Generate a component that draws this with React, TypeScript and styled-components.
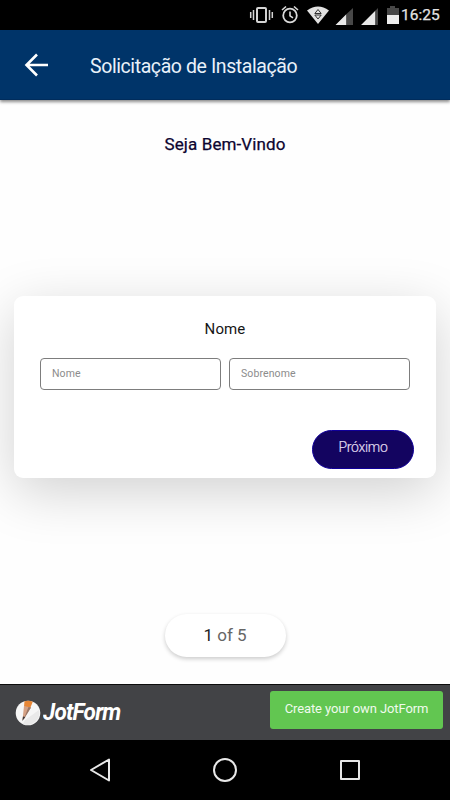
import styled, { createGlobalStyle } from "styled-components";

const GlobalStyle = createGlobalStyle`
  * {
    box-sizing: border-box;
  }
  body {
    margin: 0;
    background: #fefefe;
    font-family: Roboto, "Liberation Sans", sans-serif;
  }
`;

const Screen = styled.div`
  display: flex;
  flex-direction: column;
  width: 450px;
  height: 800px;
  overflow: hidden;
  background: #fefefe;
`;

const StatusBar = styled.div`
  display: flex;
  flex: none;
  height: 30px;
  background: #000;
  svg {
    display: block;
    margin-left: 245px;
  }
`;

const Clock = styled.time`
  color: #e4e4e4;
  font-size: 15.5px;
  -webkit-text-stroke: 0.25px #e4e4e4;
  line-height: 31px;
`;

const AppBar = styled.header`
  display: flex;
  align-items: center;
  flex: none;
  height: 70px;
  padding: 1px 0 0 24px;
  background: #003469;
  border-bottom: 1px solid #002c5c;
  box-shadow: 0 2px 3px rgba(0, 0, 0, 0.45);
  z-index: 1;
`;

const BackButton = styled.button`
  display: flex;
  width: 66px;
  padding: 0;
  border: 0;
  background: none;
`;

const AppTitle = styled.h1`
  margin: 2px 0 0;
  color: #e9f1fa;
  font-size: 19.5px;
  font-weight: 400;
  letter-spacing: -0.41px;
`;

const Content = styled.main`
  display: flex;
  flex: none;
  flex-direction: column;
  align-items: center;
  height: 584px;
`;

const Welcome = styled.h2`
  margin: 34px 0 0;
  height: 162px;
  color: #0c0430;
  font-size: 17px;
  font-weight: 400;
  -webkit-text-stroke: 0.25px #0c0430;
  letter-spacing: 0.1px;
  line-height: 20px;
`;

const Card = styled.form`
  display: flex;
  flex: none;
  flex-direction: column;
  width: 422px;
  height: 182px;
  padding: 24px 26px 0;
  border-radius: 9px;
  background: #fff;
  box-shadow: 0 14px 54px rgba(0, 0, 0, 0.18);
`;

const Question = styled.label`
  color: #161616;
  font-size: 15px;
  letter-spacing: 0.1px;
  line-height: 18px;
  text-align: center;
`;

const Fields = styled.div`
  display: flex;
  gap: 8px;
  margin-top: 20px;
`;

const Field = styled.input`
  width: 181px;
  height: 32px;
  padding: 0 11px 2px;
  border: 1px solid #7d7d7d;
  border-radius: 4px;
  outline: none;
  background: #fff;
  font: 400 10.5px Roboto, sans-serif;
  letter-spacing: 0.1px;
  &::placeholder {
    color: #8c8c8c;
    opacity: 1;
  }
`;

const NextButton = styled.button`
  align-self: flex-end;
  width: 102px;
  height: 39px;
  margin: 40px -4px 0 0;
  padding: 0 0 5px;
  border: 1px solid #11009a;
  border-radius: 20px;
  background: #130460;
  color: #e0dcf0;
  font: 300 14px Roboto, sans-serif;
  letter-spacing: -0.3px;
  -webkit-text-stroke: 0.2px #e0dcf0;
`;

const Pager = styled.div`
  flex: none;
  width: 121px;
  height: 43px;
  margin-top: 136px;
  border-radius: 22px;
  background: #fff;
  box-shadow: 0 2px 4px rgba(0, 0, 0, 0.2);
  color: #666;
  font-size: 17px;
  line-height: 43px;
  text-align: center;
  b {
    color: #222;
    font-weight: 400;
  }
`;

const Footer = styled.footer`
  display: flex;
  flex: none;
  align-items: flex-start;
  height: 56px;
  padding: 7px 7px 0 15px;
  border-top: 1px solid #0c0c0c;
  background: #424346;
`;

const Logo = styled.div`
  display: flex;
  flex: 1;
  align-items: center;
  height: 41px;
`;

const LogoName = styled.span`
  margin-left: 2px;
  color: #fff;
  font: italic 700 23px Roboto, sans-serif;
  letter-spacing: -0.8px;
  transform: scaleX(0.98);
  transform-origin: left;
`;

const CreateButton = styled.button`
  width: 173px;
  height: 38px;
  margin-top: -1px;
  padding: 0 0 4px;
  border: 0;
  border-radius: 3px;
  background: #62c651;
  color: #f0faee;
  font: 400 13px Roboto, sans-serif;
  letter-spacing: -0.1px;
`;

const NavBar = styled.nav`
  flex: none;
  height: 60px;
  background: #000;
  svg {
    display: block;
  }
`;

function StatusIcons() {
  return (
    <svg width="156" height="30" viewBox="245 0 156 30" fill="none">
      {/* vibrate */}
      <rect x="257" y="8" width="9" height="14" rx="1" stroke="#d4d4d4" strokeWidth="2" />
      <path d="M253.5 10v10M269.5 10v10M250.7 12v6M272.3 12v6" stroke="#d4d4d4" strokeWidth="1.5" />
      {/* alarm */}
      <circle cx="290" cy="15.5" r="6.8" stroke="#dadada" strokeWidth="1.8" />
      <path d="M290 11.5v4.3l3 2M282 10l4-3.5M298 10l-4-3.5" stroke="#dadada" strokeWidth="1.6" />
      {/* wifi */}
      <path d="M307 10.5Q318 2.5 329 10.5L318 24z" fill="#e2e2e2" />
      <path d="M318 9.5l3.2 4h-6.4zM314.8 15h6.4l-3.2 4z" stroke="#333" strokeWidth="1" />
      {/* signal */}
      <path d="M335.500 25L346.500 14V25zM361 25L375.500 10.500V25z" fill="#e8e8e8" />
      <path d="M346.500 14L353 8V25H346.500zM375.500 10.500L378 8V25H375.500z" fill="#484848" />
      {/* battery */}
      <path d="M387 8h3V6h5v2h4v8h-12z" fill="#484848" />
      <path d="M387 15h12v9h-12z" fill="#eee" />
    </svg>
  );
}

function App() {
  return (
    <>
      <GlobalStyle />
      <Screen>
        <StatusBar>
          <StatusIcons />
          <Clock>16:25</Clock>
        </StatusBar>
        <AppBar>
          <BackButton type="button" aria-label="Voltar">
            <svg width="26" height="26" viewBox="0 0 26 26" fill="none" stroke="#fff" strokeWidth="2.6">
              <path d="M24 13H3M13 2.5L2.5 13L13 23.5" />
            </svg>
          </BackButton>
          <AppTitle>Solicitação de Instalação</AppTitle>
        </AppBar>
        <Content>
          <Welcome>Seja Bem-Vindo</Welcome>
          <Card>
            <Question>Nome</Question>
            <Fields>
              <Field placeholder="Nome" />
              <Field placeholder="Sobrenome" />
            </Fields>
            <NextButton type="button">Próximo</NextButton>
          </Card>
          <Pager>
            <b>1</b> of 5
          </Pager>
        </Content>
        <Footer>
          <Logo>
            <svg width="26" height="26" viewBox="0 0 26 26">
              <circle cx="13" cy="13" r="12.3" fill="#f6f6f6" />
              <path d="M10 20L24 10a12 12 0 0 1-16 14z" fill="#e9e9e9" />
              <path d="M9.5 1.2Q14 0 17.8 1.7L15 8.5L9 6.5z" fill="#e78635" />
              <path d="M9 6L16 7.5L8.8 19L7.5 20z" fill="#d5a184" />
              <path d="M13.5 7L16 7.5L8.6 19.5z" fill="#987666" />
              <path d="M8 16.5L10.3 17L7.3 21z" fill="#3c3838" />
            </svg>
            <LogoName>JotForm</LogoName>
          </Logo>
          <CreateButton type="button">Create your own JotForm</CreateButton>
        </Footer>
        <NavBar>
          <svg width="450" height="60" viewBox="0 0 450 60" fill="none" stroke="#e8e8e8" strokeWidth="2" strokeLinejoin="round">
            <path d="M109 19.5v21L91 30z" />
            <circle cx="225" cy="30" r="11" />
            <rect x="341" y="21" width="18" height="18" />
          </svg>
        </NavBar>
      </Screen>
    </>
  );
}

export default App;
